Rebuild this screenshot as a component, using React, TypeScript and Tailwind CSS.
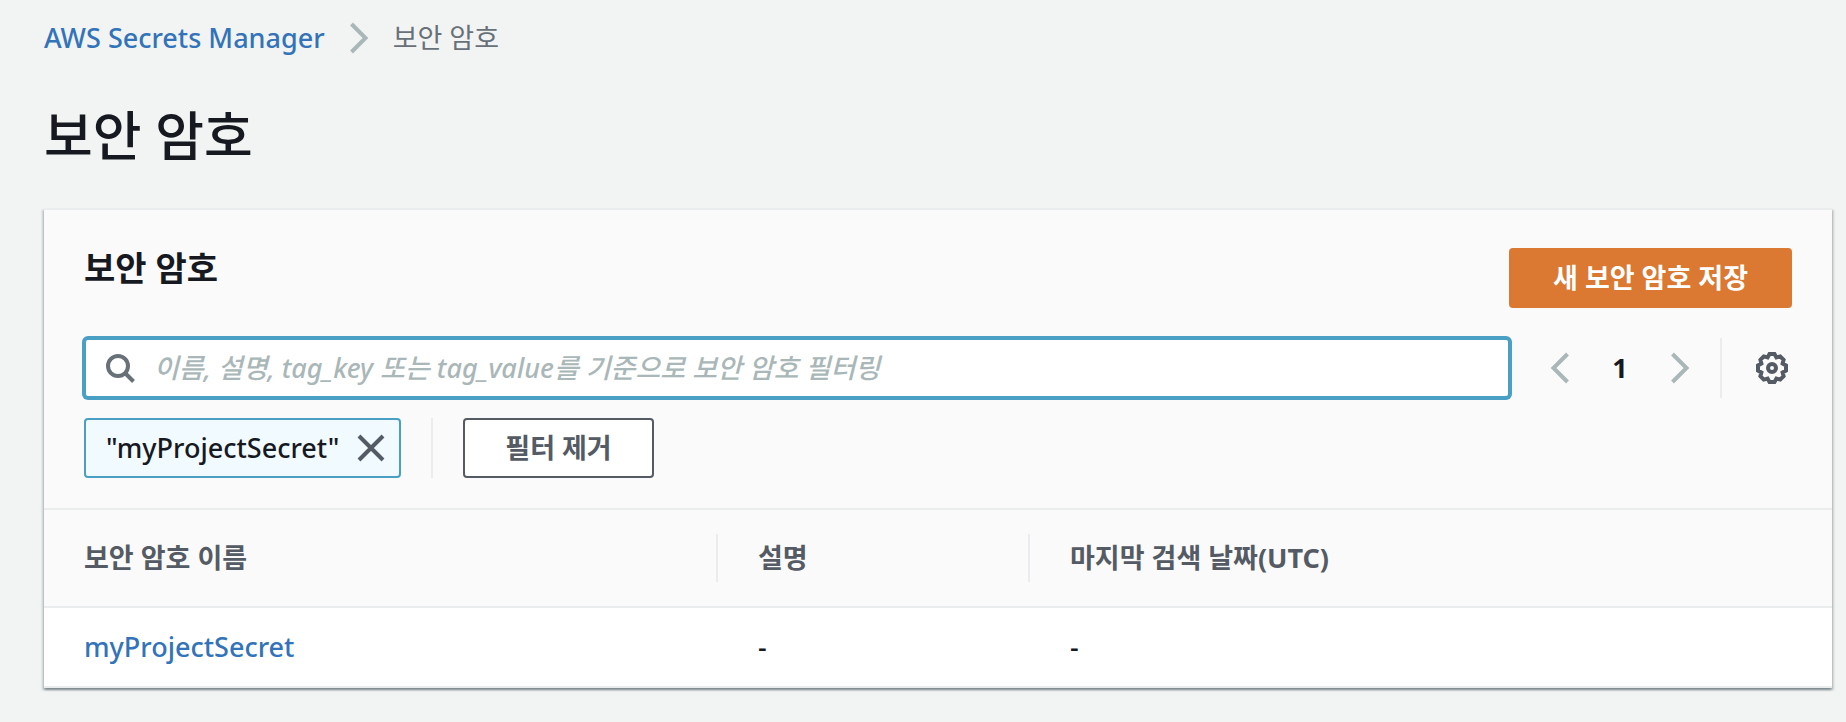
import React, { useState } from 'react';

interface Secret {
  name: string;
  description: string;
  lastRetrieved: string;
}

const secrets: Secret[] = [
  { name: 'myProjectSecret', description: '-', lastRetrieved: '-' }
];

const ChevronIcon: React.FC<{ direction: 'left' | 'right' }> = ({ direction }) => (
  <svg className="w-8 h-8 shrink-0" viewBox="0 0 32 32" fill="none" stroke="#aab7b8" strokeWidth="4" aria-hidden="true">
    {direction === 'left' ? <path d="M23.5 2 9.5 16l14 14" /> : <path d="M8.5 2l14 14-14 14" />}
  </svg>
);

const SearchIcon = () => (
  <svg className="w-8 h-8 shrink-0" viewBox="0 0 32 32" fill="none" stroke="#687078" strokeWidth="4" aria-hidden="true">
    <circle cx="14" cy="14" r="10" />
    <path d="M21 21l8.5 8.5" />
  </svg>
);

const CloseIcon = () => (
  <svg className="w-8 h-8 shrink-0" viewBox="0 0 32 32" fill="none" stroke="#545b64" strokeWidth="4" aria-hidden="true">
    <path d="M4 4l24 24M28 4L4 28" />
  </svg>
);

const GearIcon = () => (
  <svg className="w-8 h-8 shrink-0" viewBox="0 0 32 32" fill="none" stroke="#545b64" strokeWidth="4" aria-hidden="true">
    <path d="M13.500 2h5l1.900 3.400 3.800-1 3.400 3.400-1 3.800 3.400 1.900v5l-3.400 1.900 1 3.800-3.400 3.400-3.800-1-1.900 3.400h-5l-1.900-3.400-3.800 1-3.400-3.400 1-3.800L2 18.500v-5l3.400-1.900-1-3.800 3.400-3.400 3.800 1z" />
    <circle cx="16" cy="16" r="4" />
  </svg>
);

const SecretsTable: React.FC<{ items: Secret[] }> = ({ items }) => (
  <table className="w-full table-fixed text-left">
    <thead className="bg-[#fafafa] text-[#545b64]">
      <tr className="border-y-2 border-[#eaeded]">
        <th className="w-[674px] py-6 font-bold">
          <div className="h-12 flex items-center pl-10 border-r-2 border-[#eaeded]">보안 암호 이름</div>
        </th>
        <th className="w-[312px] py-6 font-bold">
          <div className="h-12 flex items-center pl-10 border-r-2 border-[#eaeded]">설명</div>
        </th>
        <th className="py-6 font-bold">
          <div className="h-12 flex items-center pl-10">마지막 검색 날짜(UTC)</div>
        </th>
      </tr>
    </thead>
    <tbody>
      {items.map(item => (
        <tr key={item.name} className="border-b-2 border-[#eaeded]">
          <td className="h-20 pl-10">
            <a href="#secret" className="text-[#3273b9]">{item.name}</a>
          </td>
          <td className="pl-10">{item.description}</td>
          <td className="pl-10">{item.lastRetrieved}</td>
        </tr>
      ))}
    </tbody>
  </table>
);

const App: React.FC = () => {
  const [query, setQuery] = useState('');
  const [filters, setFilters] = useState(['myProjectSecret']);

  const visible = secrets.filter(s => filters.every(f => s.name.includes(f)) && s.name.includes(query));

  return (
    <div className="min-h-screen bg-[#f2f4f4] pl-11 pr-3.5 pt-5 pb-8 font-['Noto_Sans','Noto_Sans_CJK_KR',sans-serif] font-medium text-[27px] leading-9 text-[#16191f]">
      {/* Breadcrumb */}
      <nav aria-label="Breadcrumb" className="flex items-center gap-[18px]">
        <a href="#home" className="text-[#3273b9]">AWS Secrets Manager</a>
        <ChevronIcon direction="right" />
        <span className="text-[#687078] font-normal">보안 암호</span>
      </nav>

      <h1 className="mt-10 text-[53px] leading-[80px]">보안 암호</h1>

      <main className="mt-8 bg-white border-t-2 border-[#eaeded] shadow-[0_2px_2px_0_rgba(0,28,36,0.3),2px_2px_2px_0_rgba(0,28,36,0.15),-2px_2px_2px_0_rgba(0,28,36,0.15)]">
        <div className="bg-[#fafafa] px-10 pt-[38px] pb-[30px]">
          <div className="flex items-start justify-between">
            <h2 className="text-[34px] leading-10 font-bold">보안 암호</h2>
            <button className="h-[60px] px-11 rounded-sm bg-[#db7832] text-white font-bold">
              새 보안 암호 저장
            </button>
          </div>

          {/* Search and pagination */}
          <div className="mt-[30px] flex items-center">
            <label className="flex-1 flex items-center gap-[18px] h-[60px] px-[18px] rounded-sm bg-white border-2 border-[#4a9fc5] ring-2 ring-[#4a9fc5]">
              <SearchIcon />
              <input
                type="text"
                value={query}
                onChange={e => setQuery(e.target.value)}
                aria-label="보안 암호 필터링"
                placeholder="이름, 설명, tag_key 또는 tag_value를 기준으로 보안 암호 필터링"
                className="flex-1 min-w-0 outline-none placeholder:italic placeholder:text-[#aab7b8]"
              />
            </label>
            <div className="flex items-center pl-[34px] pr-6">
              <button aria-label="이전 페이지"><ChevronIcon direction="left" /></button>
              <span className="w-[88px] text-center font-bold">1</span>
              <button aria-label="다음 페이지"><ChevronIcon direction="right" /></button>
            </div>
            <div className="h-[60px] flex items-center pl-[34px] pr-1 border-l-2 border-[#eaeded]">
              <button aria-label="환경설정"><GearIcon /></button>
            </div>
          </div>

          {/* Active filters */}
          {filters.length > 0 && (
            <div className="mt-5 flex items-center">
              {filters.map(filter => (
                <div key={filter} className="h-[60px] flex items-center gap-4 pl-5 pr-3 rounded-sm border-2 border-[#4a9fc5] bg-[#f1faff]">
                  <span>"{filter}"</span>
                  <button aria-label="필터 삭제" onClick={() => setFilters(filters.filter(f => f !== filter))}>
                    <CloseIcon />
                  </button>
                </div>
              ))}
              <div className="ml-[30px] h-[60px] pl-[30px] border-l-2 border-[#eaeded]">
                <button
                  onClick={() => setFilters([])}
                  className="h-[60px] px-10 rounded-sm border-2 border-[#545b64] bg-white text-[#545b64] font-bold"
                >
                  필터 제거
                </button>
              </div>
            </div>
          )}
        </div>

        <SecretsTable items={visible} />
      </main>
    </div>
  );
};

export default App;
